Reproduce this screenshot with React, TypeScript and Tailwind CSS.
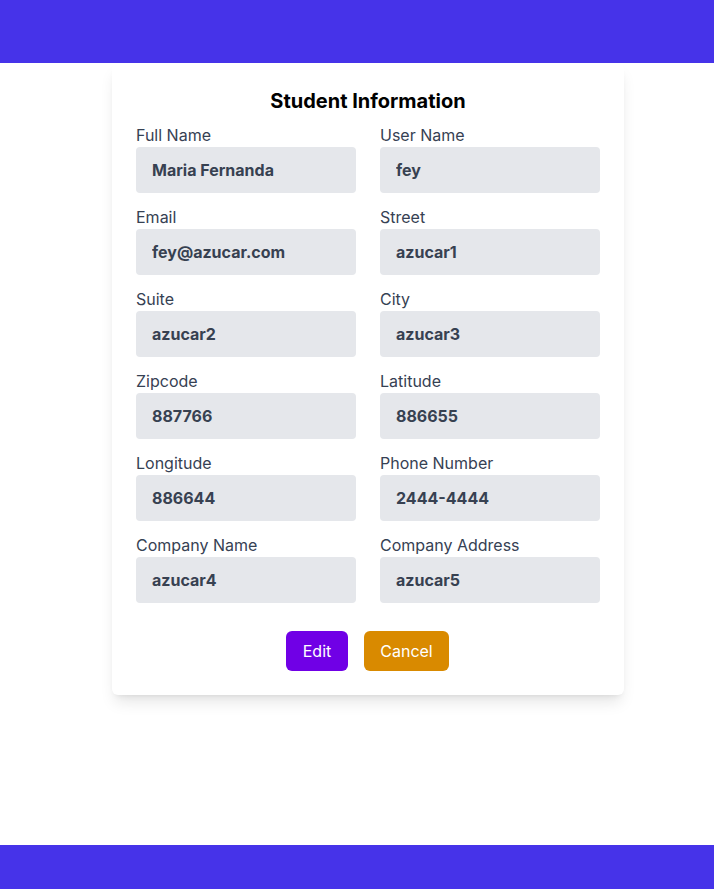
import React, { useState } from "react";

interface Field {
  key: string;
  label: string;
}

const fields: Field[] = [
  { key: "fullName", label: "Full Name" },
  { key: "userName", label: "User Name" },
  { key: "email", label: "Email" },
  { key: "street", label: "Street" },
  { key: "suite", label: "Suite" },
  { key: "city", label: "City" },
  { key: "zipcode", label: "Zipcode" },
  { key: "latitude", label: "Latitude" },
  { key: "longitude", label: "Longitude" },
  { key: "phone", label: "Phone Number" },
  { key: "companyName", label: "Company Name" },
  { key: "companyAddress", label: "Company Address" },
];

const initialStudent: Record<string, string> = {
  fullName: "Maria Fernanda",
  userName: "fey",
  email: "fey@azucar.com",
  street: "azucar1",
  suite: "azucar2",
  city: "azucar3",
  zipcode: "887766",
  latitude: "886655",
  longitude: "886644",
  phone: "2444-4444",
  companyName: "azucar4",
  companyAddress: "azucar5",
};

const App: React.FC = () => {
  const [student, setStudent] = useState(initialStudent);

  const handleChange = (e: React.ChangeEvent<HTMLInputElement>) => {
    const { name, value } = e.target;
    setStudent((prev) => ({ ...prev, [name]: value }));
  };

  return (
    <div className="min-h-screen flex flex-col bg-white font-['Inter',sans-serif]">
      <header className="h-[63px] bg-[#4633e9]" />

      <main className="h-[782px]">
        <div className="ml-[112px] w-[512px] bg-white rounded-md shadow-lg px-6 pt-6 pb-6">
          <h1 className="text-xl leading-7 font-bold text-black text-center mb-2">Student Information</h1>
          <form className="grid grid-cols-2 gap-x-6 gap-y-3" onSubmit={(e) => e.preventDefault()}>
            {fields.map((field) => (
              <div key={field.key} className="flex flex-col">
                <label className="text-base text-gray-700 leading-6">{field.label}</label>
                <input
                  name={field.key}
                  value={student[field.key]}
                  onChange={handleChange}
                  className="h-[46px] bg-gray-200 rounded px-4 text-base font-bold text-[#374151] outline-none"
                />
              </div>
            ))}
          </form>
          <div className="flex justify-center gap-4 mt-7 pr-px">
            <button className="h-10 w-[62px] rounded-md bg-[#7000e6] text-white text-base">Edit</button>
            <button className="h-10 w-[85px] rounded-md bg-[#d98a00] text-white text-base">Cancel</button>
          </div>
        </div>
      </main>

      <footer className="h-[44px] bg-[#4633e9]" />
    </div>
  );
};

export default App;
